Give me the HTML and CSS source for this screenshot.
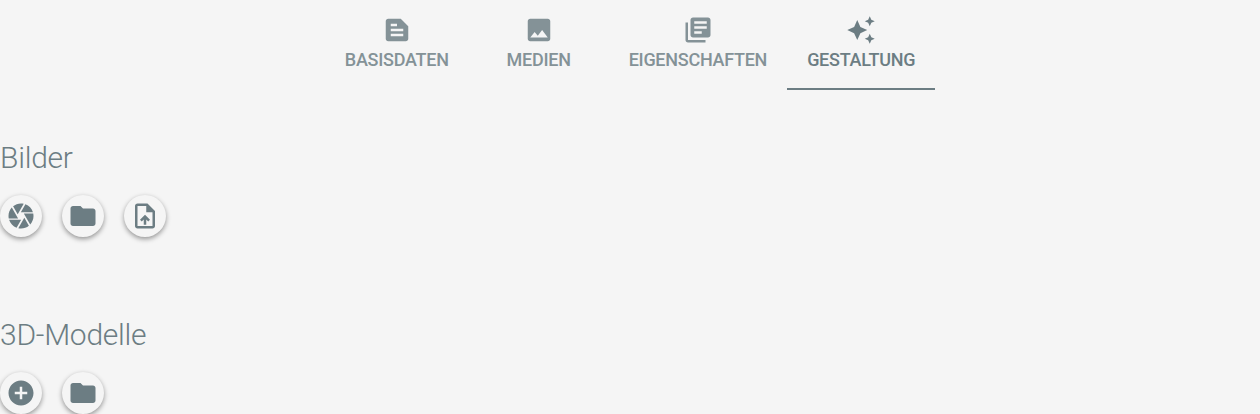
FILE: index.html
```html
<!DOCTYPE html>
<html lang="de">
<head>
<meta charset="utf-8">
<title>Gestaltung</title>
<link rel="stylesheet" href="styles.css">
</head>
<body>
<nav class="tabs">
  <a class="tab"><svg class="icon" viewBox="0 0 24 24"><path d="M15 3H5c-1.100 0-2 .9-2 2v14c0 1.100.9 2 2 2h14c1.100 0 2-.9 2-2V9l-6-6zM7 7h5v2H7V7zm10 10H7v-2h10v2zm0-4H7v-2h10v2z"/></svg><span>BASISDATEN</span></a>
  <a class="tab"><svg class="icon" viewBox="0 0 24 24"><path d="M21 19V5c0-1.100-.9-2-2-2H5c-1.100 0-2 .9-2 2v14c0 1.100.9 2 2 2h14c1.100 0 2-.9 2-2zM8.500 13.500l2.500 3.010L14.500 12l4.500 6H5l3.500-4.500z"/></svg><span>MEDIEN</span></a>
  <a class="tab"><svg class="icon" viewBox="0 0 24 24"><path d="M4 6H2v14c0 1.100.9 2 2 2h14v-2H4V6zm16-4H8c-1.100 0-2 .9-2 2v12c0 1.100.9 2 2 2h12c1.100 0 2-.9 2-2V4c0-1.100-.9-2-2-2zm-1 9H9V9h10v2zm-4 4H9v-2h6v2zm4-8H9V5h10v2z"/></svg><span>EIGENSCHAFTEN</span></a>
  <a class="tab active"><svg class="icon" viewBox="0 0 24 24"><path d="M19 9l1.250-2.750L23 5l-2.750-1.250L19 1l-1.250 2.750L15 5l2.750 1.250L19 9zm-7.500.5L9 4 6.500 9.500 1 12l5.500 2.500L9 20l2.500-5.500L17 12l-5.500-2.500zM19 15l-1.250 2.750L15 19l2.750 1.250L19 23l1.250-2.750L23 19l-2.750-1.250L19 15z"/></svg><span>GESTALTUNG</span></a>
</nav>
<main>
  <section class="section">
    <h2>Bilder</h2>
    <div class="actions">
      <button class="fab" aria-label="Kamera"><svg class="icon" viewBox="0 0 24 24"><path d="M9.400 10.500l4.770-8.260C13.470 2.090 12.750 2 12 2c-2.400 0-4.600.85-6.320 2.250l3.660 6.350.06-.1zM21.540 9c-.92-2.920-3.150-5.260-6-6.340L11.880 9h9.660zm.26 1h-7.490l.29.500 4.760 8.250C20.980 16.970 22 14.610 22 12c0-.69-.07-1.350-.2-2zM8.540 12l-3.900-6.750C3.010 7.030 2 9.390 2 12c0 .69.07 1.350.2 2h7.490l-1.150-2zm-6.080 3c.92 2.920 3.150 5.260 6 6.340L12.120 15H2.460zm11.270 0l-3.900 6.760c.7.15 1.420.24 2.170.24 2.400 0 4.600-.85 6.320-2.250l-3.660-6.350-.93 1.600z"/></svg></button>
      <button class="fab" aria-label="Ordner"><svg class="icon" viewBox="0 0 24 24"><path d="M10 4H4c-1.100 0-1.990.9-1.990 2L2 18c0 1.100.9 2 2 2h16c1.100 0 2-.9 2-2V8c0-1.100-.9-2-2-2h-8l-2-2z"/></svg></button>
      <button class="fab" aria-label="Hochladen"><svg class="icon" viewBox="0 0 24 24"><path d="M14 2H6c-1.100 0-1.990.9-1.990 2L4 20c0 1.100.89 2 1.990 2H18c1.100 0 2-.9 2-2V8l-6-6zm4 18H6V4h7v5h5v11zM8 15.010l1.410 1.410L11 14.840V19h2v-4.160l1.590 1.590L16 15.010 12.010 11 8 15.010z"/></svg></button>
    </div>
  </section>
  <section class="section">
    <h2>3D-Modelle</h2>
    <div class="actions">
      <button class="fab" aria-label="Neu"><svg class="icon" viewBox="0 0 24 24"><path d="M12 2C6.480 2 2 6.480 2 12s4.480 10 10 10 10-4.480 10-10S17.520 2 12 2zm5 11h-4v4h-2v-4H7v-2h4V7h2v4h4v2z"/></svg></button>
      <button class="fab" aria-label="Ordner"><svg class="icon" viewBox="0 0 24 24"><path d="M10 4H4c-1.100 0-1.990.9-1.990 2L2 18c0 1.100.9 2 2 2h16c1.100 0 2-.9 2-2V8c0-1.100-.9-2-2-2h-8l-2-2z"/></svg></button>
    </div>
  </section>
</main>
</body>
</html>
```
FILE: styles.css
```css
* { box-sizing: border-box; }
body {
  margin: 0;
  background: #f5f5f5;
  color: #6c7d83;
  font-family: Roboto, sans-serif;
}
.tabs { display: flex; justify-content: center; height: 90px; }
.tab {
  display: flex;
  flex-direction: column;
  align-items: center;
  min-width: 140px;
  padding: 15px 20px 0;
  border-bottom: 2px solid transparent;
  font-size: 18px;
  font-weight: 500;
  letter-spacing: -.27px;
  line-height: 30px;
  color: #849297;
}
.tab.active { color: #6c7d83; border-color: #6c7d83; }
.icon { display: block; width: 30px; height: 30px; fill: currentColor; flex: none; }
.section { padding-top: 48px; }
.section + .section { padding-top: 78px; }
h2 { margin: 0; font-size: 30px; line-height: 40px; font-weight: 300; letter-spacing: -.25px; }
.actions { display: flex; gap: 20px; margin-top: 17px; }
.fab {
  display: flex;
  align-items: center;
  justify-content: center;
  width: 42px;
  height: 42px;
  padding: 0;
  border: 0;
  border-radius: 50%;
  background: #f5f5f5;
  color: #6c7d83;
  box-shadow: 0 2px 5px rgba(0, 0, 0, .4);
}
```
